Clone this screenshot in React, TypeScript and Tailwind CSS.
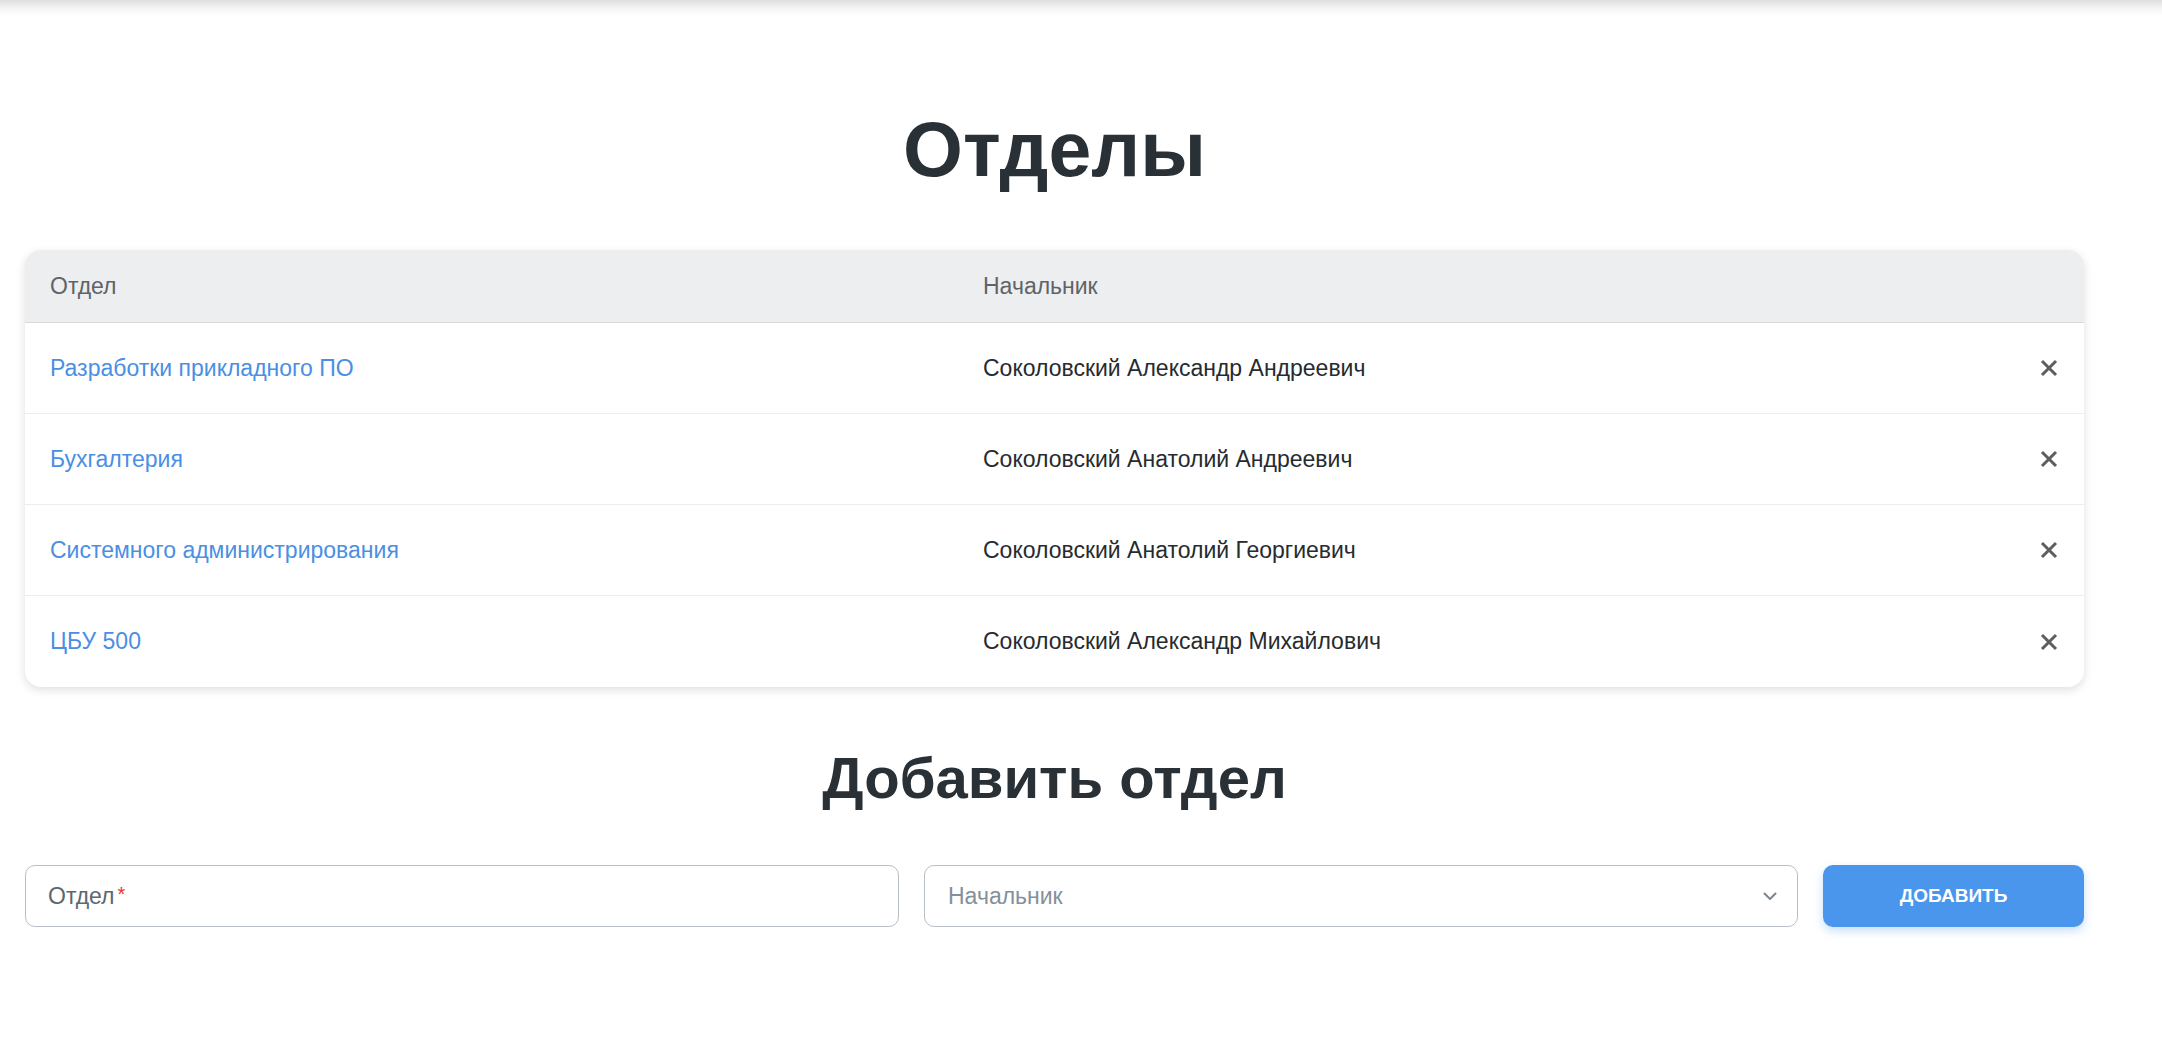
import React from "react";

type Dept = {
  id: number;
  name: string;
  chief: string;
};

const departments: Dept[] = [
  { id: 1, name: "Разработки прикладного ПО", chief: "Соколовский Александр Андреевич" },
  { id: 2, name: "Бухгалтерия", chief: "Соколовский Анатолий Андреевич" },
  { id: 3, name: "Системного администрирования", chief: "Соколовский Анатолий Георгиевич" },
  { id: 4, name: "ЦБУ 500", chief: "Соколовский Александр Михайлович" },
];

const CloseIcon = () => (
  <svg className="w-[18px] h-[18px]" viewBox="0 0 18 18" fill="none">
    <path d="M2 2L16 16M16 2L2 16" stroke="#5e5e5e" strokeWidth="3" strokeLinecap="butt" />
  </svg>
);

const Row = ({ dept, last }: { dept: Dept; last: boolean }) => (
  <div
    className={`grid grid-cols-[933px_1fr_70px] items-center h-[91px] ${
      last ? "" : "border-b border-[#ececec]"
    }`}
  >
    <a className="pl-[25px] text-[23px] text-[#4a8fe3] cursor-pointer">{dept.name}</a>
    <span className="pl-[25px] text-[23px] text-[#262b2f]">{dept.chief}</span>
    <button className="flex items-center justify-center h-full">
      <CloseIcon />
    </button>
  </div>
);

export default function App() {
  return (
    <div className="min-h-screen bg-white font-['Liberation_Sans',Arial,sans-serif]">
      {/* top bar shadow */}
      <div className="h-[16px] bg-gradient-to-b from-[#dedede] via-[#f4f4f4] to-white" />

      <div className="pl-[25px] w-[2084px]">
        <h1 className="mt-[95px] text-center text-[77px] leading-none font-bold text-[#293136]">
          Отделы
        </h1>

        {/* Table */}
        <div className="mt-[62px] rounded-[16px] bg-white shadow-[0_3px_10px_rgba(0,0,0,0.13)] overflow-hidden">
          <div className="grid grid-cols-[933px_1fr_70px] items-center h-[73px] bg-[#edeef0] border-b border-[#d6d8da]">
            <span className="pl-[25px] text-[23px] text-[#5f6368]">Отдел</span>
            <span className="pl-[25px] text-[23px] text-[#5f6368]">Начальник</span>
            <span />
          </div>
          {departments.map((d, i) => (
            <Row key={d.id} dept={d} last={i === departments.length - 1} />
          ))}
        </div>

        <h2 className="mt-[62px] text-center text-[58px] leading-none font-bold text-[#293136]">
          Добавить отдел
        </h2>

        {/* Add form */}
        <div className="mt-[58px] grid grid-cols-[1fr_1fr_261px] gap-x-[25px]">
          <div className="h-[62px] rounded-[10px] border border-[#b7bec5] flex items-center px-[22px]">
            <span className="text-[23px] text-[#5d6770]">Отдел</span>
            <span className="text-[20px] text-[#e5372b] ml-[3px] -mt-[4px]">*</span>
          </div>
          <div className="h-[62px] rounded-[10px] border border-[#b7bec5] flex items-center justify-between pl-[23px] pr-[20px]">
            <span className="text-[23px] text-[#84909a]">Начальник</span>
            <svg className="w-[14px] h-[9px]" viewBox="0 0 14 9" fill="none">
              <path d="M1.5 1.5L7 7L12.5 1.5" stroke="#7b858e" strokeWidth="2" strokeLinecap="round" strokeLinejoin="round" />
            </svg>
          </div>
          <button className="h-[62px] rounded-[10px] bg-[#4a96ec] text-white text-[19px] font-bold uppercase shadow-[0_4px_10px_rgba(74,150,236,0.3)]">
            Добавить
          </button>
        </div>
      </div>
    </div>
  );
}
